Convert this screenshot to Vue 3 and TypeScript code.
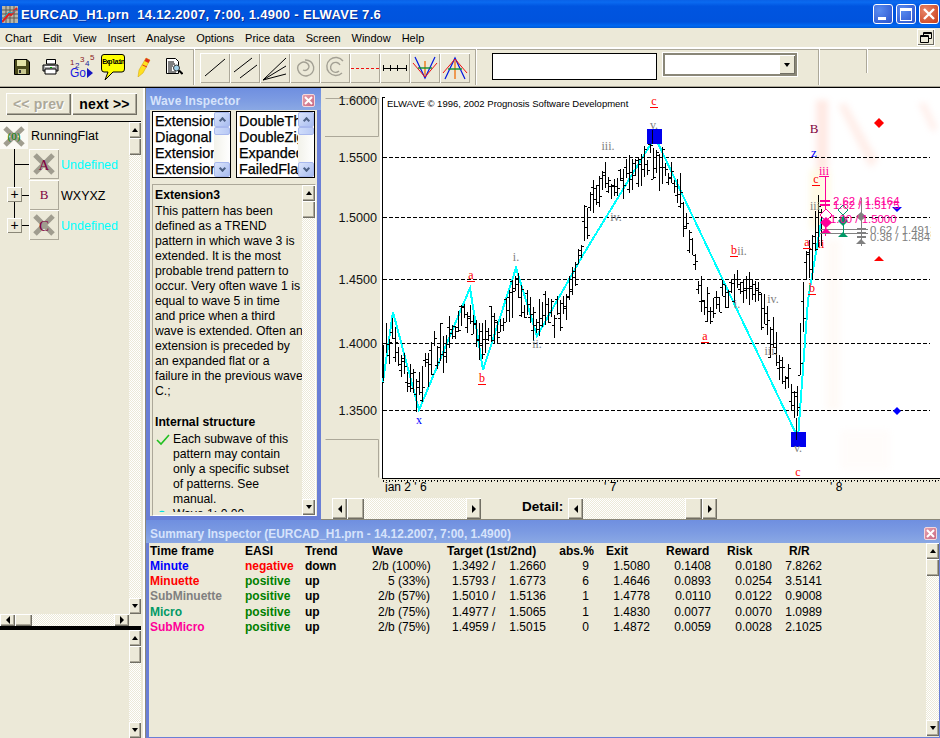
<script setup lang="ts">
const menus = ['Chart', 'Edit', 'View', 'Insert', 'Analyse', 'Options', 'Price data', 'Screen', 'Window', 'Help']
const windowTitle = 'EURCAD_H1.prn  14.12.2007, 7:00, 1.4900 - ELWAVE 7.6'

const way: [number, number][] = [
  [383, 355], [393, 335], [405, 372], [418, 392], [430, 352], [442, 345], [470, 312], [482, 348], [494, 332],
  [515, 290], [538, 322], [560, 315], [575, 280], [584, 230], [592, 190], [610, 180], [630, 172], [652, 155], [670, 180],
  [683, 210], [695, 268], [705, 315], [720, 300], [740, 285], [760, 300], [770, 332], [785, 372], [797, 402],
  [800, 340], [806, 268], [815, 240], [824, 215],
]
function midAt(x: number): number {
  for (let i = 1; i < way.length; i++) {
    if (x <= way[i][0]) {
      const [x0, y0] = way[i - 1]
      const [x1, y1] = way[i]
      return y0 + ((y1 - y0) * (x - x0)) / (x1 - x0)
    }
  }
  return way[way.length - 1][1]
}
let seed = 4711
const rnd = () => (seed = (seed * 16807) % 2147483647) / 2147483647
let d = 'M383.5 345V381M382 382H384 '
for (let x = 386; x <= 823; x += 3) {
  const m = Math.round(midAt(x) + (rnd() - 0.5) * 24)
  const h = Math.round((x > 795 ? 28 : 12) + rnd() * 26)
  const t = m - Math.round(h / 2)
  const b = t + h
  const o = t + Math.round(rnd() * h)
  const c = t + Math.round(rnd() * h)
  d += `M${x + 0.5} ${t}V${b}M${x - 2} ${o + 0.5}H${x}M${x + 1} ${c + 0.5}H${x + 3}`
}
const barsPath = d

const cyan = '383,382 393,312 419,410 470,288 483,370 516,268 537,336 583,255 655,137 798,438 808,300 822,216'
const gridY = [157, 217, 279, 343, 410]
const prices: [string, number][] = [['1.6000', 100], ['1.5500', 157], ['1.5000', 217], ['1.4500', 279], ['1.4000', 343], ['1.3500', 410]]

interface Lab { t: string; x: number; y: number; c: string; u?: boolean }
const R = '#ff0000'
const G = '#808080'
const labels: Lab[] = [
  { t: 'c', x: 654, y: 105, c: R, u: true }, { t: 'v.', x: 654, y: 129, c: G }, { t: 'iii.', x: 608, y: 150, c: G },
  { t: 'iv.', x: 616, y: 221, c: G }, { t: 'i.', x: 516, y: 261, c: G }, { t: 'a', x: 471, y: 279, c: R, u: true },
  { t: 'b', x: 482, y: 382, c: R, u: true }, { t: 'ii.', x: 537, y: 348, c: G }, { t: 'a', x: 705, y: 340, c: R, u: true },
  { t: 'b', x: 734, y: 254, c: R, u: true }, { t: 'ii.', x: 742, y: 255, c: G }, { t: 'iv.', x: 773, y: 303, c: G },
  { t: 'iii.', x: 771, y: 355, c: G }, { t: 'i.', x: 737, y: 308, c: G }, { t: 'v.', x: 798, y: 452, c: G },
  { t: 'c', x: 798, y: 476, c: R }, { t: 'a', x: 807, y: 246, c: R, u: true }, { t: 'b', x: 812, y: 292, c: R, u: true },
  { t: 'c', x: 816, y: 183, c: R, u: true }, { t: 'iii', x: 815, y: 210, c: G }, { t: 'ii', x: 821, y: 248, c: R },
]

const lineSets = [
  'This pattern has been', 'defined as a TREND', 'pattern in which wave 3 is', 'extended. It is the most',
  'probable trend pattern to', 'occur. Very often wave 1 is', 'equal to wave 5 in time', 'and price when a third',
  'wave is extended. Often an', 'extension is preceded by', 'an expanded flat or a', 'failure in the previous wave', 'C.;',
]
const subLines = ['pattern may contain', 'only a specific subset', 'of patterns. See', 'manual.']

const rows = [
  { n: 'Minute', c: '#0000ff', e: 'negative', ec: '#ff0000', tr: 'down', w: '2/b (100%)', a: '1.3492', b: '1.2660', p: '9', x: '1.5080', r: '0.1408', k: '0.0180', rr: '7.8262' },
  { n: 'Minuette', c: '#ff0000', e: 'positive', ec: '#008000', tr: 'up', w: '5 (33%)', a: '1.5793', b: '1.6773', p: '6', x: '1.4646', r: '0.0893', k: '0.0254', rr: '3.5141' },
  { n: 'SubMinuette', c: '#808080', e: 'positive', ec: '#008000', tr: 'up', w: '2/b (57%)', a: '1.5010', b: '1.5136', p: '1', x: '1.4778', r: '0.0110', k: '0.0122', rr: '0.9008' },
  { n: 'Micro', c: '#009966', e: 'positive', ec: '#008000', tr: 'up', w: '2/b (75%)', a: '1.4977', b: '1.5065', p: '1', x: '1.4830', r: '0.0077', k: '0.0070', rr: '1.0989' },
  { n: 'SubMicro', c: '#ff0099', e: 'positive', ec: '#008000', tr: 'up', w: '2/b (75%)', a: '1.4959', b: '1.5015', p: '0', x: '1.4872', r: '0.0059', k: '0.0028', rr: '2.1025' },
]
const lists = [
  ['Extension', 'Diagonal', 'Extension', 'Extension'],
  ['DoubleThree', 'DoubleZigzag', 'Expanded', 'FailedFlat'],
]
</script>

<template>
  <div class="app">
    <header class="titlebar">
      <svg class="appicon" width="16" height="17" viewBox="0 0 16 17">
        <rect width="16" height="17" fill="#b9b6a8" />
        <path d="M0 4H16M0 8H16M0 12H16M4 0V17M8 0V17M12 0V17" stroke="#5b5b55" stroke-width="1" />
        <path d="M0 16L7 8L9 9L15 2" stroke="#e02020" stroke-width="2" fill="none" />
        <path d="M2 11L7 6L10 7L14 4" stroke="#20b0c0" stroke-width="1" fill="none" />
      </svg>
      <span class="title">{{ windowTitle }}</span>
      <div class="wbtns">
        <div class="wbtn"><i class="wmin"></i></div>
        <div class="wbtn"><i class="wmax"></i></div>
        <div class="wbtn close">
          <svg width="14" height="14" viewBox="0 0 14 14"><path d="M2 2L12 12M12 2L2 12" stroke="#fff" stroke-width="2.4" /></svg>
        </div>
      </div>
    </header>

    <nav class="menubar">
      <span v-for="m in menus" :key="m" class="menu">{{ m }}</span>
      <span class="restore">
        <svg width="12" height="11" viewBox="0 0 12 11"><path d="M3.5 3.5V.5H11.5V6.5H8.5M.5 3.5H8.5V10.5H.5ZM.5 4.5H8.5M3.5 1.5H11.5" fill="none" stroke="#000" /></svg>
      </span>
    </nav>

    <div class="toolbar">
      <div class="tgroup first">
        <svg class="ticon" width="16" height="16" viewBox="0 0 16 16" style="margin-left:14px">
          <path d="M.5.5H13L15.5 3V15.5H.5Z" fill="#4a4a1c" stroke="#000" />
          <rect x="3" y="1" width="9" height="6" fill="#e4e4a8" />
          <rect x="4" y="10" width="8" height="5" fill="#c8c890" />
          <rect x="5" y="11" width="2" height="3" fill="#333" />
        </svg>
        <svg class="ticon" width="17" height="16" viewBox="0 0 17 16" style="margin-left:12px">
          <path d="M4.5 .5H13.5V5H4.5Z" fill="#fff" stroke="#000" />
          <path d="M1 6H16V12H1Z" fill="#aaa" stroke="#000" />
          <path d="M3 10H14V15H3Z" fill="#fff" stroke="#000" />
          <path d="M3 7.5H13" stroke="#fff" />
          <rect x="8" y="8" width="2" height="1" fill="#0a0" />
        </svg>
        <div class="gobox">
          <span class="n n1">1</span><span class="n n2">2</span><span class="n n3">3</span><span class="n n4">4</span><span class="n n5">5</span>
          <span class="go">Go</span>
          <i class="gotri"></i>
        </div>
        <div class="explain">
          <svg width="24" height="26" viewBox="0 0 24 26">
            <path d="M3 .5H21Q23.5 .5 23.5 3V15Q23.5 18 21 18H12L4 26L7 18H3Q.5 18 .5 15V3Q.5 .5 3 .5Z" fill="#ffff00" stroke="#000" />
          </svg>
          <span class="extext">Explain</span>
        </div>
        <svg class="ticon" width="14" height="20" viewBox="0 0 14 20" style="margin-left:12px">
          <path d="M9 1L13 3L6 16L1 20L2 13Z" fill="#ffe020" stroke="#d0a000" stroke-width=".5" />
          <path d="M9 1L13 3L11.5 6L7.5 4Z" fill="#e03020" />
          <path d="M5.5 8L10 10" stroke="#e03020" stroke-width="1" />
        </svg>
        <svg class="ticon" width="17" height="17" viewBox="0 0 17 17" style="margin-left:15px">
          <path d="M.5 .5H9.5L12.5 3.5V15.5H.5Z" fill="#fff" stroke="#000" />
          <path d="M2 4H8M2 6H9M2 8H7M2 10H6M2 12H6M2 14H10" stroke="#000" stroke-width="1" />
          <circle cx="10.5" cy="10" r="3" fill="#9fd0e8" stroke="#333" />
          <path d="M13 12.5L16.5 16" stroke="#000" stroke-width="2" />
        </svg>
      </div>
      <div class="sep s0"></div>
      <div class="tools">
        <div class="tool"><svg width="24" height="24" viewBox="0 0 24 24"><path d="M2 20L22 3" stroke="#000" /></svg></div>
        <div class="tool"><svg width="24" height="24" viewBox="0 0 24 24"><path d="M1 16L19 2M7 22L24 9" stroke="#000" /></svg></div>
        <div class="tool"><svg width="26" height="26" viewBox="0 0 26 26"><path d="M1 25L24 3M1 25L24 11M1 25L24 19" stroke="#000" /></svg></div>
        <div class="tool"><svg width="24" height="24" viewBox="0 0 24 24" fill="none" stroke="#a3a094" stroke-width="1.4"><path d="M12 4A8 8 0 1 1 5 14A6 6 0 0 1 15 8A4 4 0 0 1 10 14" /></svg></div>
        <div class="tool"><svg width="24" height="24" viewBox="0 0 24 24" fill="none" stroke="#a3a094" stroke-width="1.4"><path d="M20 5A9 9 0 1 0 19 17M16 15A5 5 0 1 1 17 9" /></svg></div>
        <div class="tool"><svg width="28" height="24" viewBox="0 0 28 24"><path d="M0 12.5H28" stroke="#f01010" stroke-dasharray="3 2" /></svg></div>
        <div class="tool"><svg width="26" height="24" viewBox="0 0 26 24"><path d="M1 12.5H25M1.5 9V15M8.5 9V15M15.5 9V15M24.5 9V15" stroke="#000" /></svg></div>
        <div class="tool">
          <svg width="26" height="26" viewBox="0 0 26 26">
            <path d="M3 2L13 23L23 2" stroke="#0018e0" fill="none" stroke-width="1.2" />
            <path d="M1 8L13 22L25 8" stroke="#f01010" fill="none" />
            <path d="M13 6V20" stroke="#f07818" stroke-width="1.4" />
            <path d="M6 13H20" stroke="#109030" stroke-width="1.4" />
          </svg>
        </div>
        <div class="tool">
          <svg width="26" height="26" viewBox="0 0 26 26">
            <path d="M3 24L13 3L23 24" stroke="#0018e0" fill="none" stroke-width="1.2" />
            <path d="M1 18L13 4L25 18" stroke="#f01010" fill="none" />
            <path d="M13 6V24" stroke="#f07818" stroke-width="1.4" />
            <path d="M6 14H20" stroke="#109030" stroke-width="1.4" />
          </svg>
        </div>
      </div>
      <div class="sep s1"></div>
      <div class="blackbox"></div>
      <div class="combo"><span class="comboBtn"><i class="tri d blk"></i></span></div>
      <div class="sep s2"></div>
      <div class="sep s3"></div>
    </div>

    <main class="main">
      <aside class="left">
        <div class="navrow">
          <button class="nbtn off">&lt;&lt; prev</button>
          <button class="nbtn">next &gt;&gt;</button>
        </div>
        <div class="treewrap">
          <div class="tree">
            <div class="rootrow">
              <div class="rooticon">
                <svg width="24" height="24" viewBox="0 0 24 24">
                  <path d="M3 4L21 21M21 4L3 21" stroke="#a09d8f" stroke-width="5" />
                  <text x="12" y="16" text-anchor="middle" class="iconlet" fill="#008000">(0)</text>
                </svg>
              </div>
              <span class="rootlbl">RunningFlat</span>
            </div>
            <div class="noderow">
              <div class="gut"><i class="v"></i><i class="h"></i></div>
              <div class="nodebtn">
                <svg width="26" height="26" viewBox="0 0 26 26">
                  <path d="M4 4L22 22M22 4L4 22" stroke="#a09d8f" stroke-width="5" />
                  <text x="13" y="19" text-anchor="middle" class="iconlet big" fill="#800040">A</text>
                </svg>
              </div>
              <span class="nodelbl cy">Undefined</span>
            </div>
            <div class="noderow">
              <div class="gut"><i class="v"></i><i class="h2"></i><span class="plus">+</span></div>
              <div class="nodebtn"><span class="blet">B</span></div>
              <span class="nodelbl">WXYXZ</span>
            </div>
            <div class="noderow">
              <div class="gut"><i class="v half"></i><i class="h2"></i><span class="plus">+</span></div>
              <div class="nodebtn">
                <svg width="26" height="26" viewBox="0 0 26 26">
                  <path d="M4 4L22 22M22 4L4 22" stroke="#a09d8f" stroke-width="5" />
                  <text x="13" y="19" text-anchor="middle" class="iconlet big" fill="#800040">C</text>
                </svg>
              </div>
              <span class="nodelbl cy">Undefined</span>
            </div>
          </div>
          <div class="vsb">
            <div class="sb"><i class="tri u blk"></i></div>
            <div class="sb thumb"></div>
            <div class="track"></div>
            <div class="sb"><i class="tri d blk"></i></div>
          </div>
          <div class="hsb tree-h">
            <div class="sb w"><i class="tri l blk"></i></div>
            <div class="sb thumbh"></div>
            <div class="track"></div>
            <div class="sb w"><i class="tri r blk"></i></div>
          </div>
          <div class="corner"></div>
        </div>
        <div class="splitbar"></div>
        <div class="lower">
          <div class="vsb">
            <div class="sb"><i class="tri u blk"></i></div>
            <div class="sb thumb"></div>
            <div class="track"></div>
            <div class="sb"><i class="tri d blk"></i></div>
          </div>
        </div>
      </aside>

      <div class="rightcol">
        <div class="toprow">
          <section class="inspector">
            <div class="ptitle">
              <span>Wave Inspector</span>
              <span class="pclose"><svg width="9" height="9" viewBox="0 0 9 9"><path d="M1 1L8 8M8 1L1 8" stroke="#fff" stroke-width="2" /></svg></span>
            </div>
            <div class="lists">
              <div v-for="(l, i) in lists" :key="i" class="lbox">
                <div class="litems"><div v-for="(t, j) in l" :key="j" class="litem">{{ t }}</div></div>
                <div class="xpbar">
                  <div class="xpb"><i class="chev up"></i></div>
                  <div class="xpthumb"></div>
                  <div class="xptrack"></div>
                  <div class="xpb"><i class="chev"></i></div>
                </div>
              </div>
            </div>
            <div class="desc">
              <div class="dtext">
                <div class="dh">Extension3</div>
                <div v-for="l in lineSets" :key="l" class="dl">{{ l }}</div>
                <div class="dh dh2">Internal structure</div>
                <div class="dl sub first">
                  <svg class="chk" width="14" height="12" viewBox="0 0 14 12"><path d="M1 6L5 10L13 1" stroke="#20c020" stroke-width="1.6" fill="none" /></svg>
                  Each subwave of this
                </div>
                <div v-for="l in subLines" :key="l" class="dl sub">{{ l }}</div>
                <div class="dl sub first">
                  <svg class="chk" width="14" height="12" viewBox="0 0 14 12"><circle cx="6" cy="6" r="3.5" stroke="#00e0e0" stroke-width="1.4" fill="none" /></svg>
                  Wave 1: 0.00
                </div>
              </div>
              <div class="vsb dsb">
                <div class="sb"><i class="tri u blk"></i></div>
                <div class="sb thumb"></div>
                <div class="track"></div>
                <div class="sb"><i class="tri d blk"></i></div>
              </div>
            </div>
          </section>

          <section class="chart">
            <svg class="chartsvg" width="619" height="404" viewBox="321 88 619 404">
              <defs>
                <filter id="blur1"><feGaussianBlur stdDeviation="3" /></filter>
                <clipPath id="txtclip"><rect x="380" y="88" width="551" height="300" /></clipPath>
              </defs>
              <rect x="321" y="88" width="619" height="404" fill="#ece9d8" />
              <path d="M325.5 98.5H378.5V136.5H325M325.5 439.5H378.5V477.5" fill="none" stroke="#aca899" />
              <rect x="380" y="88" width="2" height="390" fill="#fff" />
              <rect x="382" y="88" width="558" height="390" fill="#fff" />
              <g filter="url(#blur1)" opacity=".3">
                <rect x="816" y="100" width="12" height="130" fill="#ffb8a4" />
                <rect x="810" y="170" width="20" height="60" fill="#fff0a8" />
                <path d="M838 105L846 103L878 160L870 168Z" fill="#ffc8b8" />
                <path d="M918 103L926 103L938 128L932 132Z" fill="#ffccc0" />
                <rect x="826" y="240" width="14" height="170" fill="#fff0e4" />
                <rect x="840" y="430" width="50" height="40" fill="#ffeee4" opacity=".5" />
              </g>
              <path v-for="y in gridY" :key="y" :d="`M383 ${y + 0.5}H930`" stroke="#000" stroke-dasharray="4 2" shape-rendering="crispEdges" />
              <path d="M382.5 97V478.5M382 478.5H940" stroke="#000" shape-rendering="crispEdges" />
              <path d="M385 97.5H382" stroke="#000" shape-rendering="crispEdges" />
              <path d="M383 480.5H940" stroke="#000" stroke-dasharray="1 2" shape-rendering="crispEdges" />
              <path d="M383 481.5H940" stroke="#000" stroke-dasharray="1 5" shape-rendering="crispEdges" />
              <text x="387" y="107" class="copy">ELWAVE © 1996, 2002  Prognosis  Software  Development</text>
              <polyline :points="cyan" fill="none" stroke="#00ffff" stroke-width="2" shape-rendering="crispEdges" />
              <path :d="barsPath" fill="none" stroke="#000" stroke-width="1" shape-rendering="crispEdges" />
              <rect x="647" y="129" width="15" height="15" fill="#0000ee" />
              <rect x="791" y="432" width="15" height="15" fill="#0000ee" />
              <path d="M652.5 130V144M796.5 418V440" stroke="#000" stroke-opacity=".9" shape-rendering="crispEdges" />
              <text v-for="p in prices" :key="p[0]" x="377" :y="p[1] + 5" text-anchor="end" class="price">{{ p[0] }}</text>
              <template v-for="(l, i) in labels" :key="i">
                <text :x="l.x" :y="l.y" text-anchor="middle" class="wl" :fill="l.c">{{ l.t }}</text>
                <path v-if="l.u" :d="`M${l.x - 4} ${l.y + 2.5}H${l.x + 4}`" :stroke="l.c" shape-rendering="crispEdges" />
              </template>
              <text x="419" y="424" text-anchor="middle" class="wl" fill="#0000ff">x</text>
              <text x="814" y="133" text-anchor="middle" class="wl big" fill="#800040">B</text>
              <text x="814" y="157" text-anchor="middle" class="wl big" fill="#0000ff">z</text>
              <text x="824" y="175" text-anchor="middle" class="wl" fill="#ff0099">iii</text>
              <path d="M819 176.5H829" stroke="#ff0099" />
              <!-- fib cluster -->
              <path d="M825.5 176V236" stroke="#ff0099" shape-rendering="crispEdges" />
              <path d="M820 201H830M820 205H830" stroke="#ff0099" stroke-width="2.4" shape-rendering="crispEdges" />
              <path d="M820 229.5H868M820 233.5H868" stroke="#808080" shape-rendering="crispEdges" />
              <path d="M857 229H866M857 233H866M857 237H866" stroke="#808080" stroke-width="2.4" shape-rendering="crispEdges" />
              <path d="M861.5 198V246" stroke="#808080" shape-rendering="crispEdges" />
              <path d="M843.5 212V236" stroke="#009966" shape-rendering="crispEdges" />
              <path d="M826 209L832 215L826 221L820 215Z" fill="#fff" stroke="#ff0099" />
              <path d="M843 205L848 210L843 215L838 210Z" fill="#fff" stroke="#009966" />
              <path d="M826 217L832 222.5L826 228L820 222.5Z" fill="#ff0099" />
              <path d="M843 216L848 221L843 226L838 221Z" fill="#009966" />
              <path d="M861 212L866 216.5L861 221L856 216.5Z" fill="#808080" />
              <path d="M826 228L831 233H821Z" fill="#ff0099" />
              <path d="M843 232L848 237H838Z" fill="#009966" />
              <path d="M861 239L866 244H856Z" fill="#808080" />
              <path d="M879 118L884 123L879 128L874 123Z" fill="#ff0000" />
              <path d="M879 256L884 261H874Z" fill="#ff0000" />
              <path d="M892 207L902 207L897 212Z" fill="#0000ff" />
              <path d="M897 407L901 411L897 415L893 411Z" fill="#0000ff" />
              <g clip-path="url(#txtclip)">
                <text x="833" y="205" class="fib" fill="#ff0099">2.62 / 1.6164</text>
                <text x="833" y="209" class="fib" fill="#ff0099">1.62 / 1.5175</text>
                <text x="830" y="223" class="fib" fill="#ff0099">1.00 / 1.5000</text>
                <text x="870" y="234" class="fib gr" fill="#808080">0.62 / 1.4913</text>
                <text x="870" y="241" class="fib gr" fill="#808080">0.38 / 1.4849</text>
              </g>
              <text x="385" y="491" class="date">jan 2 ' 6</text>
              <text x="604" y="491" class="date">' 7</text>
              <text x="830" y="491" class="date">' 8</text>
            </svg>
            <div class="bottomrow">
              <div class="hsb h1">
                <div class="sb w"><i class="tri l blk"></i></div>
                <div class="sb thumbh"></div>
                <div class="track"></div>
                <div class="sb w"><i class="tri r blk"></i></div>
              </div>
              <span class="detail">Detail:</span>
              <div class="hsb h2b">
                <div class="sb w"><i class="tri l blk"></i></div>
                <div class="track"></div>
                <div class="sb thumbh"></div>
                <div class="sb w"><i class="tri r blk"></i></div>
              </div>
            </div>
          </section>
        </div>

        <section class="summary">
          <div class="ptitle stitle">
            <span>Summary Inspector (EURCAD_H1.prn - 14.12.2007, 7:00, 1.4900)</span>
            <span class="pclose"><svg width="9" height="9" viewBox="0 0 9 9"><path d="M1 1L8 8M8 1L1 8" stroke="#fff" stroke-width="2" /></svg></span>
          </div>
          <div class="sumbody">
            <table class="tbl">
              <colgroup>
                <col style="width:95px" /><col style="width:60px" /><col style="width:67px" /><col style="width:75px" />
                <col style="width:99px" /><col style="width:48px" /><col style="width:56px" /><col style="width:61px" />
                <col style="width:61px" /><col style="width:50px" />
              </colgroup>
              <thead>
                <tr>
                  <th>Time frame</th><th>EASI</th><th>Trend</th><th>Wave</th><th>Target (1st/2nd)</th>
                  <th class="ar">abs.%</th><th class="p12">Exit</th><th class="p16">Reward</th><th class="p16">Risk</th><th class="p17">R/R</th>
                </tr>
              </thead>
              <tbody>
                <tr v-for="r in rows" :key="r.n">
                  <td class="b" :style="{ color: r.c }">{{ r.n }}</td>
                  <td class="b" :style="{ color: r.ec }">{{ r.e }}</td>
                  <td class="b">{{ r.tr }}</td>
                  <td class="num wave">{{ r.w }}</td>
                  <td class="num target"><span class="ta">{{ r.a }} /</span><span>{{ r.b }}</span></td>
                  <td class="num abs">{{ r.p }}</td>
                  <td class="num">{{ r.x }}</td>
                  <td class="num">{{ r.r }}</td>
                  <td class="num">{{ r.k }}</td>
                  <td class="num">{{ r.rr }}</td>
                </tr>
              </tbody>
            </table>
            <div class="vsb sumsb">
              <div class="sb"><i class="tri u blk"></i></div>
              <div class="sb thumb"></div>
              <div class="track"></div>
              <div class="sb"><i class="tri d blk"></i></div>
            </div>
          </div>
        </section>
      </div>
    </main>
  </div>
</template>

<style>
html, body { margin: 0; background: #ece9d8; }
</style>

<style scoped>
.app {
  width: 940px; height: 738px; overflow: hidden; display: flex; flex-direction: column;
  background: #ece9d8; font-family: "Liberation Sans", Arial, sans-serif; color: #000;
}
.titlebar {
  height: 28px; flex: none; display: flex; align-items: center; padding-left: 2px; box-sizing: border-box;
  background: linear-gradient(180deg, #0a62e8 0, #0a6af0 8%, #0055e0 22%, #0053dd 78%, #0068f2 92%, #0058d0 100%);
}
.appicon { flex: none; }
.title {
  margin-left: 3px; color: #fff; font-weight: bold; font-size: 13px; letter-spacing: .33px; white-space: pre;
  text-shadow: 1px 1px #0a2a90;
}
.wbtns { margin-left: auto; display: flex; gap: 3px; padding-right: 1px; }
.wbtn {
  width: 20px; height: 20px; box-sizing: border-box; border: 1px solid #fff; border-radius: 3px; position: relative;
  background: radial-gradient(circle at 30% 30%, #5a8cf0, #2a52cc); display: flex; align-items: center; justify-content: center;
}
.wbtn.close { background: radial-gradient(circle at 30% 30%, #e8866a, #c83c18); }
.wmin { position: absolute; left: 4px; bottom: 3px; width: 8px; height: 3px; background: #fff; }
.wmax { width: 10px; height: 9px; border: 1px solid #fff; border-top-width: 3px; }
.menubar { height: 19px; flex: none; display: flex; align-items: center; position: relative; font-size: 11px; padding-left: 5px; }
.menu { margin-right: 11px; letter-spacing: 0; }
.restore {
  position: absolute; left: 918px; top: 2px; width: 16px; height: 15px; background: #ece9d8; display: flex; align-items: center; justify-content: center;
  box-shadow: inset -1px -1px #716f64, 0 0 0 1px #fff;
}
.toolbar {
  height: 41px; flex: none; box-sizing: border-box; border-top: 2px solid #fff; outline: 0; display: flex; position: relative;
  border-bottom: 1px solid #000; box-shadow: inset 0 1px #aca899, inset 0 -1px #aca899;
}
.tgroup { width: 192px; display: flex; align-items: center; flex: none; padding-bottom: 3px; box-sizing: border-box; }
.ticon { flex: none; }
.gobox { position: relative; width: 25px; height: 25px; margin-left: 11px; flex: none; }
.n { position: absolute; font-size: 8px; line-height: 8px; color: #8b1a1a; }
.n1 { left: 0; top: 5px; } .n2 { left: 5px; top: 8px; color: #1a1a9a; } .n3 { left: 10px; top: 2px; }
.n4 { left: 15px; top: 6px; color: #1a1a9a; } .n5 { left: 20px; top: 0; }
.go { position: absolute; left: 0; top: 13px; font-size: 12px; line-height: 12px; color: #1818e0; }
.gotri { position: absolute; left: 17px; top: 14px; border-left: 6px solid #1818c0; border-top: 5px solid transparent; border-bottom: 5px solid transparent; }
.explain { position: relative; width: 24px; height: 26px; margin-left: 6px; flex: none; }
.explain svg { display: block; }
.extext { position: absolute; left: 1px; top: 4px; width: 22px; text-align: center; font-size: 7px; font-weight: bold; line-height: 9px; font-family: "Liberation Mono", monospace; letter-spacing: -1.1px; }
.tools { position: absolute; left: 200px; top: 4px; display: flex; }
.tool {
  width: 30px; height: 30px; box-sizing: border-box; display: flex; align-items: center; justify-content: center;
  box-shadow: inset 1px 1px #fff, inset -1px -1px #aca899;
}
.sep { position: absolute; width: 1px; background: #aca899; box-shadow: 1px 0 #fff; top: 0; bottom: 2px; }
.s0 { left: 193px; }
.s1 { left: 475px; }
.s2 { left: 818px; }
.s3 { left: 866px; bottom: 14px; }
.blackbox { position: absolute; left: 492px; top: 4px; width: 165px; height: 27px; box-sizing: border-box; border: 1px solid #000; background: #fff; }
.combo {
  position: absolute; left: 663px; top: 4px; width: 134px; height: 23px; box-sizing: border-box; background: #fff;
  border: 2px solid #8a8778; border-right-color: #8a8778; box-shadow: 0 0 0 1px #fff; display: flex; justify-content: flex-end;
}
.comboBtn {
  width: 16px; background: #ece9d8; box-shadow: inset 1px 1px #fff, inset -1px -1px #716f64;
  display: flex; align-items: center; justify-content: center;
}
.main { height: 650px; display: flex; flex: none; }
.left { width: 146px; flex: none; box-sizing: border-box; padding-right: 5px; display: flex; flex-direction: column; border-right: 1px solid #8a8778; box-shadow: inset -2px 0 #fff; }
.navrow { height: 34px; flex: none; box-sizing: border-box; padding: 5px 0 0 6px; display: flex; gap: 1px; border-bottom: 1px solid #000; width: 141px; margin-left: 0; }
.nbtn {
  width: 65px; height: 22px; border: 0; padding: 0; background: #ece9d8; font-family: inherit; font-weight: bold; font-size: 14px; letter-spacing: .2px;
  box-shadow: inset 1px 1px #fff, inset -1px -1px #716f64, inset -2px -2px #aca899; line-height: 20px; color: #000;
}
.nbtn.off { color: #aca899; text-shadow: 1px 1px #fff; }
.treewrap { height: 504px; flex: none; display: grid; grid-template-columns: 129px 12px; grid-template-rows: 1fr 12px; width: 141px; }
.tree { overflow: hidden; }
.rootrow { height: 27px; display: flex; align-items: center; }
.rooticon { width: 28px; height: 27px; background: #fbfaf4; display: flex; align-items: center; justify-content: center; }
.rootlbl { margin-left: 3px; font-size: 12.5px; }
.noderow { height: 30.4px; display: flex; align-items: center; }
.gut { width: 29px; height: 100%; position: relative; flex: none; }
.v { position: absolute; left: 14px; top: 0; bottom: 0; width: 1px; background: #000; }
.v.half { bottom: 50%; }
.h { position: absolute; left: 14px; right: 0; top: 50%; height: 1px; background: #000; }
.h2 { position: absolute; left: 22px; right: 0; top: 50%; height: 1px; background: #000; }
.plus {
  position: absolute; left: 7px; top: 8px; width: 15px; height: 15px; background: #ece9d8; box-shadow: inset 1px 1px #fff, inset -1px -1px #8a8778;
  text-align: center; line-height: 14px; font-size: 14px;
}
.nodebtn {
  width: 30px; height: 30px; flex: none; box-sizing: border-box; box-shadow: inset 1px 1px #fff, inset -1px -1px #aca899;
  display: flex; align-items: center; justify-content: center;
}
.iconlet { font-size: 11px; font-family: "Liberation Serif", serif; }
.iconlet.big { font-size: 15px; }
.blet { font-family: "Liberation Serif", serif; font-size: 13px; color: #800040; }
.nodelbl { margin-left: 2px; font-size: 12.5px; white-space: nowrap; position: relative; top: 1px; }
.nodelbl.cy { color: #00ffff; }
.vsb { display: flex; flex-direction: column; width: 12px; flex: none; }
.hsb { display: flex; }
.sb {
  flex: none; height: 16px; width: 100%; background: #ece9d8; display: flex; align-items: center; justify-content: center;
  box-shadow: inset 1px 1px #fff, inset -1px -1px #716f64, inset -2px -2px #aca899;
}
.hsb .sb { height: 100%; }
.sb.w { width: 15px; }
.sb.thumb { height: 17px; }
.sb.thumbh { width: 17px; }
.track { flex: 1; background: repeating-conic-gradient(#fff 0 25%, #ece9d8 0 50%) 0 0 / 2px 2px; }
.tree-h { height: 12px; }
.corner { background: #ece9d8; }
.tri { width: 0; height: 0; display: block; }
.tri.u { border: 3px solid transparent; border-top: 0; border-bottom: 4px solid #000; }
.tri.d { border: 3px solid transparent; border-bottom: 0; border-top: 4px solid #000; }
.tri.l { border: 3px solid transparent; border-left: 0; border-right: 4px solid #000; border-top-width: 4px; border-bottom-width: 4px; }
.tri.r { border: 3px solid transparent; border-right: 0; border-left: 4px solid #000; border-top-width: 4px; border-bottom-width: 4px; }
.splitbar { height: 4px; flex: none; background: #000; width: 141px; }
.lower { flex: 1; display: flex; justify-content: flex-end; width: 141px; min-height: 0; overflow: hidden; }
.lower .vsb { height: 108px; }
.rightcol { flex: 1; min-width: 0; display: flex; flex-direction: column; }
.toprow { height: 432px; flex: none; display: flex; }
.inspector {
  width: 175px; flex: none; box-sizing: border-box; border: 4px solid #6a7fd6; border-top: 0; border-right-width: 4px;
  display: flex; flex-direction: column; background: #ece9d8;
}
.ptitle {
  height: 22px; flex: none; margin: 0 -4px; padding: 3px 6px 0 4px; box-sizing: border-box; display: flex; align-items: center; justify-content: space-between;
  background: linear-gradient(180deg, #6f8fe0 0, #7b9ae2 50%, #8aa8e4 100%); color: #d6e3fb; font-weight: bold; font-size: 12px; letter-spacing: .15px;
}
.pclose {
  width: 13px; height: 13px; border-radius: 2px; background: linear-gradient(135deg, #e6a0ac, #c86a84); border: 1px solid #f4d8dc; box-sizing: border-box;
  display: flex; align-items: center; justify-content: center;
}
.lists { height: 68px; flex: none; display: flex; gap: 5px; padding: 1px 0 0 2px; box-sizing: border-box; }
.lbox { width: 79px; height: 67px; box-sizing: border-box; border: 1px solid #000; background: #fff; display: flex; }
.litems { flex: 1; min-width: 0; overflow: hidden; padding: 1px 0 0 2px; }
.litem { height: 16px; line-height: 16px; font-size: 14.4px; white-space: nowrap; -webkit-text-stroke: .25px #000; }
.xpbar { width: 16px; flex: none; display: flex; flex-direction: column; background: linear-gradient(90deg, #f2f2ea, #fff); }
.xpb {
  height: 15px; flex: none; border-radius: 2px; border: 1px solid #a9b9ee; box-sizing: border-box; background: linear-gradient(135deg, #dbe5fb, #a8bcf0);
  display: flex; align-items: center; justify-content: center;
}
.xpthumb { height: 8px; flex: none; border-radius: 2px; border: 1px solid #a9b9ee; box-sizing: border-box; background: linear-gradient(90deg, #cfdcfa, #b9caf5); }
.xptrack { flex: 1; }
.chev { width: 5px; height: 5px; border-right: 2px solid #4d6185; border-bottom: 2px solid #4d6185; transform: translateY(-1px) rotate(45deg); display: block; box-sizing: border-box; }
.chev.up { transform: translateY(1px) rotate(225deg); }
.desc {
  margin: 6px 0 0 2px; width: 164px; height: 332px; flex: none; box-sizing: border-box; display: flex;
  border-top: 1px solid #aca899; border-left: 1px solid #aca899; border-bottom: 1px solid #fff; border-right: 1px solid #fff;
}
.dtext { flex: 1; min-width: 0; height: 327px; overflow: hidden; padding: 3px 0 0 2px; box-sizing: border-box; font-size: 12.2px; line-height: 15px; }
.dh { font-weight: bold; height: 16px; }
.dh2 { margin-top: 16px; height: 17px; }
.dl { white-space: nowrap; }
.sub { padding-left: 18px; position: relative; }
.chk { position: absolute; left: 1px; top: 2px; }
.dsb { width: 13px; height: 330px; }
.chart { flex: 1; min-width: 0; display: flex; flex-direction: column; }
.chartsvg { display: block; flex: none; }
.price { font-size: 12.6px; fill: #111; font-family: "Liberation Sans", Arial, sans-serif; }
.copy { font-size: 9.5px; fill: #000; font-family: "Liberation Sans", Arial, sans-serif; }
.wl { font-size: 12px; font-family: "Liberation Serif", serif; }
.wl.big { font-size: 13px; }
.fib { font-size: 11.4px; font-family: "Liberation Sans", Arial, sans-serif; }
.fib.gr { font-size: 11.4px; }
.date { font-size: 12px; fill: #000; font-family: "Liberation Sans", Arial, sans-serif; }
.bottomrow { height: 28px; box-sizing: border-box; padding: 6px 0 0 11px; display: flex; border-bottom: 1px solid #8a8778; }
.h1 { width: 149px; height: 21px; flex: none; }
.detail { margin-left: 41px; width: 46px; font-weight: bold; font-size: 13.5px; line-height: 17px; flex: none; }
.h2b { width: 149px; height: 21px; flex: none; }
.summary {
  flex: 1; min-height: 0; display: flex; flex-direction: column; box-sizing: border-box; border-left: 3px solid #6a7fd6; border-right: 1px solid #6a7fd6; border-bottom: 1px solid #6a7fd6;
}
.stitle { margin: 0 -1px 0 -3px; padding: 4px 3px 0 4px; height: 23px; font-size: 11.9px; letter-spacing: 0; }
.sumbody { flex: 1; min-height: 0; display: flex; justify-content: space-between; }
.tbl { border-collapse: collapse; table-layout: fixed; width: 672px; height: 90px; align-self: flex-start; margin: 1px 0 0 1px; font-size: 12px; }
.tbl th { text-align: left; padding: 0; height: 15px; line-height: 15px; font-weight: bold; white-space: nowrap; }
.tbl td { padding: 0; height: 15.2px; line-height: 15px; white-space: nowrap; }
.tbl .ar { text-align: right; }
.p12 { padding-left: 12px !important; }
.p16 { padding-left: 16px !important; }
.p17 { padding-left: 17px !important; }
.b { font-weight: bold; }
.num { text-align: right; }
.wave { padding-right: 17px !important; }
.target { display: flex; justify-content: space-between; padding-left: 5px !important; }
.abs { padding-right: 5px !important; }
.sumsb { width: 13px; height: 193px; }
</style>
